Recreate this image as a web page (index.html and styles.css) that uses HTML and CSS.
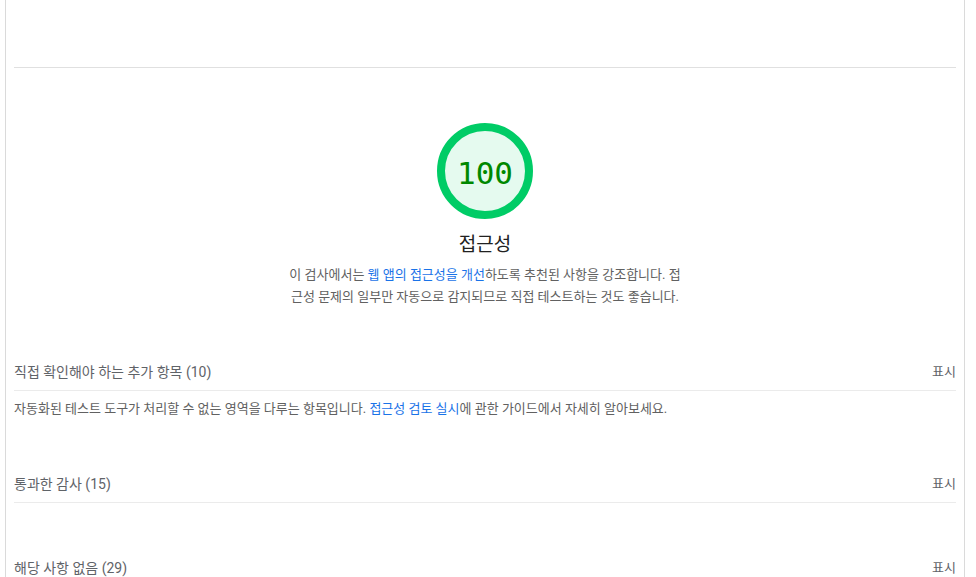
FILE: index.html
```html
<!DOCTYPE html>
<html lang="ko">
<head>
<meta charset="utf-8">
<link rel="stylesheet" href="styles.css">
</head>
<body>
<div class="page">
  <div class="top"></div>
  <section class="category-header">
    <div class="gauge">
      <svg class="gauge-svg" width="96" height="96" viewBox="0 0 96 96">
        <circle cx="48" cy="48" r="44" fill="#e5faef" stroke="#00cc66" stroke-width="8"/>
      </svg>
      <span class="gauge-value">100</span>
    </div>
    <h2 class="category-title">접근성</h2>
    <p class="category-desc">이 검사에서는 <a class="link" href="#">웹 앱의 접근성을 개선</a>하도록 추천된 사항을 강조합니다. 접근성 문제의 일부만 자동으로 감지되므로 직접 테스트하는 것도 좋습니다.</p>
  </section>

  <section class="group group-first">
    <div class="group-header">
      <span class="group-title">직접 확인해야 하는 추가 항목 <span class="count">(10)</span></span>
      <span class="toggle">표시</span>
    </div>
    <p class="group-desc">자동화된 테스트 도구가 처리할 수 없는 영역을 다루는 항목입니다. <a class="link" href="#">접근성 검토 실시</a>에 관한 가이드에서 자세히 알아보세요.</p>
  </section>

  <section class="group">
    <div class="group-header">
      <span class="group-title">통과한 감사 <span class="count">(15)</span></span>
      <span class="toggle">표시</span>
    </div>
  </section>

  <section class="group">
    <div class="group-header">
      <span class="group-title">해당 사항 없음 <span class="count">(29)</span></span>
      <span class="toggle">표시</span>
    </div>
  </section>
</div>
</body>
</html>
```

FILE: styles.css
```css
* { box-sizing: border-box; }
html, body { margin: 0; padding: 0; background: #fff; }
body {
  font-family: Roboto, "Noto Sans CJK KR", sans-serif;
  color: #212121;
  overflow: hidden;
}
.page {
  margin-left: 5px;
  width: 960px;
  min-height: 577px;
  border-left: 1px solid #dadada;
  border-right: 1px solid #dadada;
  padding: 0 8px;
}
.top {
  height: 68px;
  border-bottom: 1px solid #e0e0e0;
}
.category-header {
  display: flex;
  flex-direction: column;
  align-items: center;
  padding-top: 55px;
}
.gauge {
  position: relative;
  width: 96px;
  height: 96px;
}
.gauge-svg { display: block; }
.gauge-value {
  position: absolute;
  inset: 0;
  padding-top: 3px;
  display: flex;
  align-items: center;
  justify-content: center;
  font-family: "DejaVu Sans Mono", monospace;
  font-size: 31px;
  color: #008800;
}
.category-title {
  margin: 12px 0 0;
  font-size: 19px;
  font-weight: 400;
  line-height: 28px;
  color: #212121;
}
.category-desc {
  margin: 5px 0 0;
  width: 400px;
  text-align: center;
  font-size: 13px;
  line-height: 22px;
  color: #616161;
}
.link { color: #1a73e8; text-decoration: none; }
.group { margin-top: 55px; }
.group-first { margin-top: 54px; }
.group-header {
  display: flex;
  justify-content: space-between;
  align-items: center;
  padding-bottom: 8px;
  border-bottom: 1px solid #ebebeb;
  line-height: 20px;
}
.group-title {
  font-size: 14px;
  color: #5f6368;
}
.count { color: #5f6368; }
.toggle {
  font-size: 13px;
  color: #5f6368;
}
.group-desc {
  margin: 8px 0 0;
  font-size: 13px;
  line-height: 20px;
  color: #616161;
}
```
